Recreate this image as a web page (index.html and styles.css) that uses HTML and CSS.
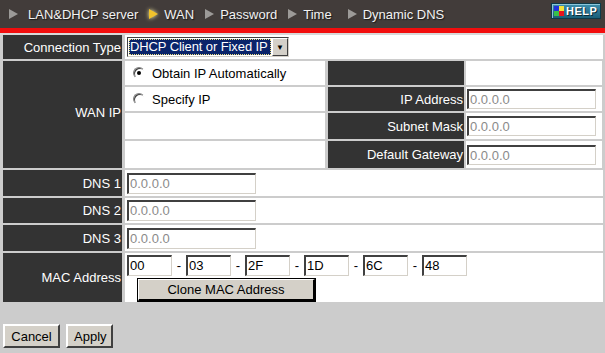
FILE: index.html
```html
<!DOCTYPE html>
<html lang="en">
  <head>
    <meta charset="UTF-8" />
    <meta name="viewport" content="width=device-width, initial-scale=1.0" />
    <title>WAN</title>
    <link rel="stylesheet" href="styles.css">
  </head>
  <body>
    <div class="topbar">
      <div class="tabs">
        <span class="arrow first"></span><span class="tab">LAN&amp;DHCP server</span>
        <span class="arrow active"></span><span class="tab">WAN</span>
        <span class="arrow"></span><span class="tab">Password</span>
        <span class="arrow"></span><span class="tab time">Time</span>
        <span class="arrow"></span><span class="tab">Dynamic DNS</span>
      </div>
      <div class="help">
        <span class="help-icon">
          <i class="sq blue"></i><i class="sq yellow"></i><i class="sq green"></i><i class="sq red"></i>
        </span>
        <span class="help-text">HELP</span>
      </div>
    </div>
    <div class="redline"></div>

    <div class="form">
      <div class="label">Connection Type</div>
      <div class="value">
        <div class="select">
          <span class="select-text">DHCP Client or Fixed IP</span>
          <span class="select-btn">&#9660;</span>
        </div>
      </div>

      <div class="label wan-label">WAN IP</div>
      <div class="wan">
        <div class="cell opt"><span class="radio on"></span>Obtain IP Automatically</div>
        <div class="cell dark"></div>
        <div class="cell"></div>

        <div class="cell opt"><span class="radio"></span>Specify IP</div>
        <div class="cell dark">IP Address</div>
        <div class="cell field"><div class="input wide">0.0.0.0</div></div>

        <div class="cell"></div>
        <div class="cell dark">Subnet Mask</div>
        <div class="cell field"><div class="input wide">0.0.0.0</div></div>

        <div class="cell"></div>
        <div class="cell dark">Default Gateway</div>
        <div class="cell field"><div class="input wide">0.0.0.0</div></div>
      </div>

      <div class="label">DNS 1</div>
      <div class="value"><div class="input wide dns">0.0.0.0</div></div>

      <div class="label">DNS 2</div>
      <div class="value"><div class="input wide dns">0.0.0.0</div></div>

      <div class="label">DNS 3</div>
      <div class="value"><div class="input wide dns">0.0.0.0</div></div>

      <div class="label">MAC Address</div>
      <div class="value mac">
        <div class="mac-row">
          <div class="input mac-in">00</div><span class="dash">-</span>
          <div class="input mac-in">03</div><span class="dash">-</span>
          <div class="input mac-in">2F</div><span class="dash">-</span>
          <div class="input mac-in">1D</div><span class="dash">-</span>
          <div class="input mac-in">6C</div><span class="dash">-</span>
          <div class="input mac-in">48</div>
        </div>
        <button class="btn clone">Clone MAC Address</button>
      </div>
    </div>

    <div class="actions">
      <button class="btn">Cancel</button>
      <button class="btn">Apply</button>
    </div>
  </body>
</html>
```

FILE: styles.css
```css
body {
  margin: 0;
  background-color: #cccccc;
  font-family: "Liberation Sans", Arial, sans-serif;
  font-size: 13px;
  width: 605px;
  height: 353px;
  overflow: hidden;
}

.topbar {
  height: 28px;
  background-color: #423c3a;
  display: flex;
  justify-content: space-between;
  align-items: flex-start;
}

.tabs {
  display: flex;
  align-items: center;
  height: 28px;
  padding-left: 9px;
}

/* small triangles in front of each tab */
.arrow {
  width: 0;
  height: 0;
  border-left: 9px solid #9c9a98;
  border-top: 5px solid transparent;
  border-bottom: 5px solid transparent;
  margin-right: 6px;
}

.arrow.first {
  margin-right: 10px;
}

.arrow.active {
  border-left-color: #f0c22c;
  filter: drop-shadow(0 0 2px #fff6b0);
}

.tab {
  color: #f2f2f2;
  font-size: 13px;
  text-shadow: 1px 1px 1px #1a1a1a;
  margin-right: 11px;
}

.tab.time {
  margin-right: 16px;
}

.help {
  margin: 3px 4px 0 0;
  width: 50px;
  height: 16px;
  background: linear-gradient(#3f8fae, #1a5f78);
  border: 1px solid #0d3a4a;
  box-shadow: inset 1px 1px 0 #8cc6da;
  display: flex;
  align-items: center;
  padding-left: 2px;
  box-sizing: border-box;
}

.help-icon {
  width: 10px;
  height: 10px;
  display: grid;
  grid-template-columns: 5px 5px;
  grid-template-rows: 5px 5px;
  margin-right: 2px;
}

.sq { display: block; }
.sq.blue { background: #2233dd; }
.sq.yellow { background: #f4e23a; }
.sq.green { background: #39c04a; }
.sq.red { background: #e8141c; }

.help-text {
  color: #ffffff;
  font-weight: bold;
  font-size: 11px;
  letter-spacing: 0.5px;
  text-shadow: 1px 1px 0 #0a2a36;
}

.redline {
  height: 5px;
  background-color: #f20d0d;
  border-bottom: 2px solid #d8d8d8;
}

.form {
  display: grid;
  grid-template-columns: 119px 478px;
  grid-template-rows: 24px 107px 26px 25px 26px 49px;
  gap: 2px 3px;
  margin-left: 3px;
}

.label {
  background-color: #333333;
  color: #ffffff;
  display: flex;
  align-items: center;
  justify-content: flex-end;
  padding-right: 1px;
}

.wan-label {
  padding-bottom: 4px;
  box-sizing: border-box;
}

.value {
  background-color: #ffffff;
  display: flex;
  align-items: center;
  padding-left: 2px;
}

.select {
  width: 162px;
  height: 20px;
  border: 1px solid;
  border-color: #404040 #d4d0c8 #d4d0c8 #404040;
  box-sizing: border-box;
  display: flex;
  align-items: stretch;
  background: #ffffff;
}

.select-text {
  flex: 1;
  margin: 1px;
  background-color: #0a246a;
  color: #ffffff;
  outline: 1px dotted #f0e080;
  outline-offset: -1px;
  line-height: 16px;
  padding-left: 1px;
  letter-spacing: -0.1px;
  white-space: nowrap;
  overflow: hidden;
}

.select-btn {
  width: 16px;
  background-color: #d4d0c8;
  border: 1px solid;
  border-color: #ffffff #404040 #404040 #ffffff;
  box-sizing: border-box;
  font-size: 8px;
  color: #000;
  display: flex;
  align-items: center;
  justify-content: center;
}

.wan {
  display: grid;
  grid-template-columns: 200px 137px 136px;
  grid-template-rows: 24px 24px 26px 27px;
  gap: 2px;
}

.cell {
  background-color: #ffffff;
  display: flex;
  align-items: center;
}

.cell.dark {
  background-color: #333333;
  color: #ffffff;
  justify-content: flex-end;
  padding-right: 1px;
  margin-left: 1px;
}

.cell.opt {
  padding-left: 8px;
  color: #000000;
}

.cell.field {
  padding-left: 1px;
}

.radio {
  width: 12px;
  height: 12px;
  border-radius: 50%;
  border: 1px solid;
  border-color: #808080 #ffffff #ffffff #808080;
  box-shadow: inset 1px 1px 0 #404040;
  background: #ffffff;
  box-sizing: border-box;
  margin-right: 7px;
  position: relative;
}

.radio.on::after {
  content: "";
  position: absolute;
  left: 3px;
  top: 3px;
  width: 4px;
  height: 4px;
  border-radius: 50%;
  background: #000000;
}

.input {
  height: 21px;
  border: solid;
  border-color: #404040 #d4d0c8 #d4d0c8 #404040;
  border-width: 2px 1px 1px 2px;
  box-sizing: border-box;
  background: #ffffff;
  line-height: 18px;
  padding-left: 1px;
  color: #000000;
}

.input.wide {
  width: 129px;
  height: 20px;
  color: #8a8a8a;
}

.input.dns {
  height: 21px;
}

.value.mac {
  flex-direction: column;
  align-items: flex-start;
  justify-content: flex-start;
  padding-top: 2px;
}

.mac-row {
  display: flex;
  align-items: center;
}

.mac-in {
  width: 45px;
}

.dash {
  width: 14px;
  text-align: center;
}

.btn {
  font-family: "Liberation Sans", Arial, sans-serif;
  font-size: 13px;
  background-color: #d4d0c8;
  color: #000000;
  border: 2px solid;
  border-color: #ffffff #404040 #404040 #ffffff;
  padding: 0;
  cursor: pointer;
}

.btn.clone {
  width: 177px;
  height: 22px;
  margin: 3px 0 0 11px;
  border-color: #ffffff #000000 #000000 #ffffff;
  box-shadow: 0 0 0 1px #000000;
  border-width: 1px 2px 2px 1px;
}

.actions {
  display: flex;
  gap: 6px;
  margin: 22px 0 0 3px;
}

.actions .btn {
  height: 24px;
  padding: 0 6px;
}

.actions .btn:first-child {
  width: 57px;
}

.actions .btn:last-child {
  width: 47px;
}
```
